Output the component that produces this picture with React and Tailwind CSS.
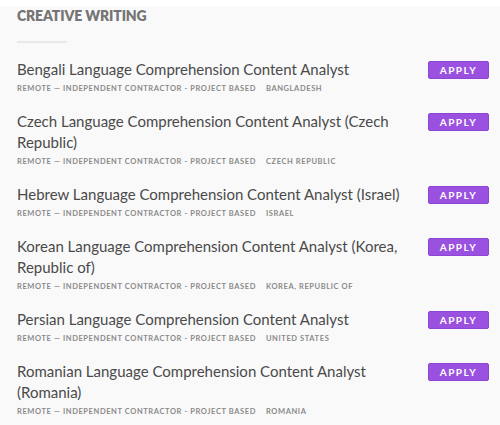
const jobs = [
  { title: 'Bengali Language Comprehension Content Analyst', location: 'Bangladesh' },
  { title: 'Czech Language Comprehension Content Analyst (Czech Republic)', location: 'Czech Republic' },
  { title: 'Hebrew Language Comprehension Content Analyst (Israel)', location: 'Israel' },
  { title: 'Korean Language Comprehension Content Analyst (Korea, Republic of)', location: 'Korea, Republic of' },
  { title: 'Persian Language Comprehension Content Analyst', location: 'United States' },
  { title: 'Romanian Language Comprehension Content Analyst (Romania)', location: 'Romania' },
];

const JobRow = ({ job }) => (
  <li className="flex items-start justify-between">
    <div className="w-[400px]">
      <h3 className="text-[15px] leading-[21px] text-[#4a4a4a] font-normal">{job.title}</h3>
      <div className="mt-[4px] text-[7.5px] leading-[10px] font-bold uppercase tracking-[0.08em] text-[#8a8a8a]">
        <span>Remote — Independent Contractor - Project Based</span>
        <span className="ml-[10px]">{job.location}</span>
      </div>
    </div>
    <button className="mt-[2px] mr-[11px] w-[61px] h-[18px] rounded-[2px] bg-[#9b51e0] border border-[#8e44d6] text-white text-[10px] font-bold uppercase tracking-[0.15em] flex items-center justify-center">
      Apply
    </button>
  </li>
);

export default function App() {
  return (
    <div className="w-[500px] h-[425px] bg-white pt-[6px] overflow-hidden" style={{ fontFamily: 'Lato, "Open Sans", sans-serif' }}>
      <section className="h-full bg-[#f9f9f9] pl-[17px]">
        <h2 className="text-[14px] leading-[20px] font-extrabold uppercase tracking-[-0.01em] text-[#757575]">Creative Writing</h2>
        <div className="mt-[15px] w-[50px] h-[2px] bg-[#e8e8e8]" />
        <ul className="mt-[16px] flex flex-col gap-[17px]">
          {jobs.map((job) => (
            <JobRow key={job.title} job={job} />
          ))}
        </ul>
      </section>
    </div>
  );
}
